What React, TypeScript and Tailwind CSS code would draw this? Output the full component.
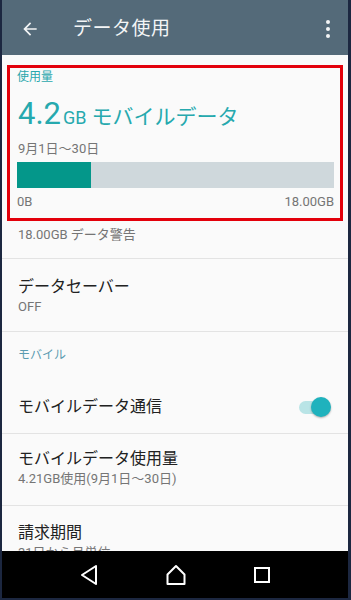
import React from 'react';

const font = { fontFamily: 'Roboto, "Noto Sans CJK JP", sans-serif' };

const Divider = () => <div className="h-px bg-[#e3e3e3]" />;

const App: React.FC = () => {
    return (
        <div className="w-[351px] h-[600px] bg-[#1c2740] pl-[2px] pr-[3px] pb-[2px] flex flex-col overflow-hidden" style={font}>
            {/* app bar */}
            <div className="h-[55px] bg-[#546a79] flex items-center pt-[3px] shrink-0">
                <svg width="20" height="20" viewBox="0 0 24 24" className="ml-[18px]">
                    <path d="M20 11H7.8l5.6-5.6L12 4l-8 8 8 8 1.4-1.4L7.8 13H20z" fill="#f2f4f5" />
                </svg>
                <div className="ml-[33px] text-[19px] text-[#f3f5f6] tracking-[0.5px]">データ使用</div>
                <div className="ml-auto mr-[18px] flex flex-col gap-[3px]">
                    <span className="w-[4px] h-[4px] rounded-full bg-[#f2f4f5]" />
                    <span className="w-[4px] h-[4px] rounded-full bg-[#f2f4f5]" />
                    <span className="w-[4px] h-[4px] rounded-full bg-[#f2f4f5]" />
                </div>
            </div>

            {/* content */}
            <div className="flex-1 bg-[#fafafa] overflow-hidden">
                <div className="mt-[10px] mx-[5px] border-[3px] border-[#e3000b] pl-[8px] pr-[6px] pb-[8px]">
                    <div className="h-[16px] mt-[1px] text-[12px] text-[#2aa8ad] leading-[16px] -ml-[1px]">使用量</div>
                    <div className="mt-[10px] h-[38px] text-[#26a9ae] leading-[38px] whitespace-nowrap">
                        <span className="text-[31px]">4.2</span>
                        <span className="text-[18px] ml-[2px]">GB</span>
                        <span className="text-[21px] ml-[5px]">モバイルデータ</span>
                    </div>
                    <div className="mt-[8px] h-[16px] text-[13px] text-[#757575] leading-[16px]">9月1日～30日</div>
                    <div className="mt-[5px] -ml-[1px] h-[26px] bg-[#cfd8dc] flex">
                        <div className="w-[74px] bg-[#04978a]" />
                    </div>
                    <div className="mt-[6px] h-[16px] flex justify-between text-[13px] text-[#757575] leading-[16px] -ml-[1px]">
                        <span>0B</span>
                        <span>18.00GB</span>
                    </div>
                </div>

                <div className="pl-[16px] pt-[5px] pb-[14px] text-[13px] text-[#757575] leading-[18px]">18.00GB データ警告</div>
                <Divider />

                <div className="pl-[16px] pt-[17px] pb-[15px]">
                    <div className="text-[16px] text-[#212121] leading-[22px]">データセーバー</div>
                    <div className="text-[13px] text-[#757575] leading-[18px]">OFF</div>
                </div>
                <Divider />

                <div className="pl-[16px] pt-[14px] pb-[17px] text-[12px] text-[#5b9bb0] leading-[18px]">モバイル</div>

                <div className="pl-[16px] pr-[17px] h-[52px] flex items-center">
                    <div className="text-[16px] text-[#212121]">モバイルデータ通信</div>
                    <div className="ml-auto relative w-[32px] h-[20px] flex items-center">
                        <div className="w-[30px] h-[13px] rounded-full bg-[#b9e4e6]" />
                        <div className="absolute right-0 w-[20px] h-[20px] rounded-full bg-[#1fb2bd] shadow-[0_1px_2px_rgba(0,0,0,0.3)]" />
                    </div>
                </div>
                <Divider />

                <div className="pl-[16px] pt-[14px] pb-[17px]">
                    <div className="text-[16px] text-[#212121] leading-[22px]">モバイルデータ使用量</div>
                    <div className="text-[13px] text-[#757575] leading-[18px]">4.21GB使用(9月1日～30日)</div>
                </div>
                <Divider />

                <div className="pl-[16px] pt-[16px]">
                    <div className="text-[16px] text-[#212121] leading-[22px]">請求期間</div>
                    <div className="text-[13px] text-[#757575] leading-[18px]">31日から月単位</div>
                </div>
            </div>

            {/* nav bar */}
            <div className="h-[47px] bg-black shrink-0 flex items-center justify-around px-[44px]">
                <svg width="20" height="22" viewBox="0 0 20 22">
                    <path d="M17 2 L3 11 L17 20 Z" fill="none" stroke="#fff" strokeWidth="2" strokeLinejoin="round" />
                </svg>
                <svg width="22" height="22" viewBox="0 0 22 22">
                    <path d="M11 2 L19.5 10.5 V20 H2.5 V10.5 Z" fill="none" stroke="#fff" strokeWidth="2" strokeLinejoin="round" />
                </svg>
                <svg width="18" height="18" viewBox="0 0 18 18">
                    <rect x="2" y="2" width="14" height="14" fill="none" stroke="#fff" strokeWidth="2" />
                </svg>
            </div>
        </div>
    );
};

export default App;
